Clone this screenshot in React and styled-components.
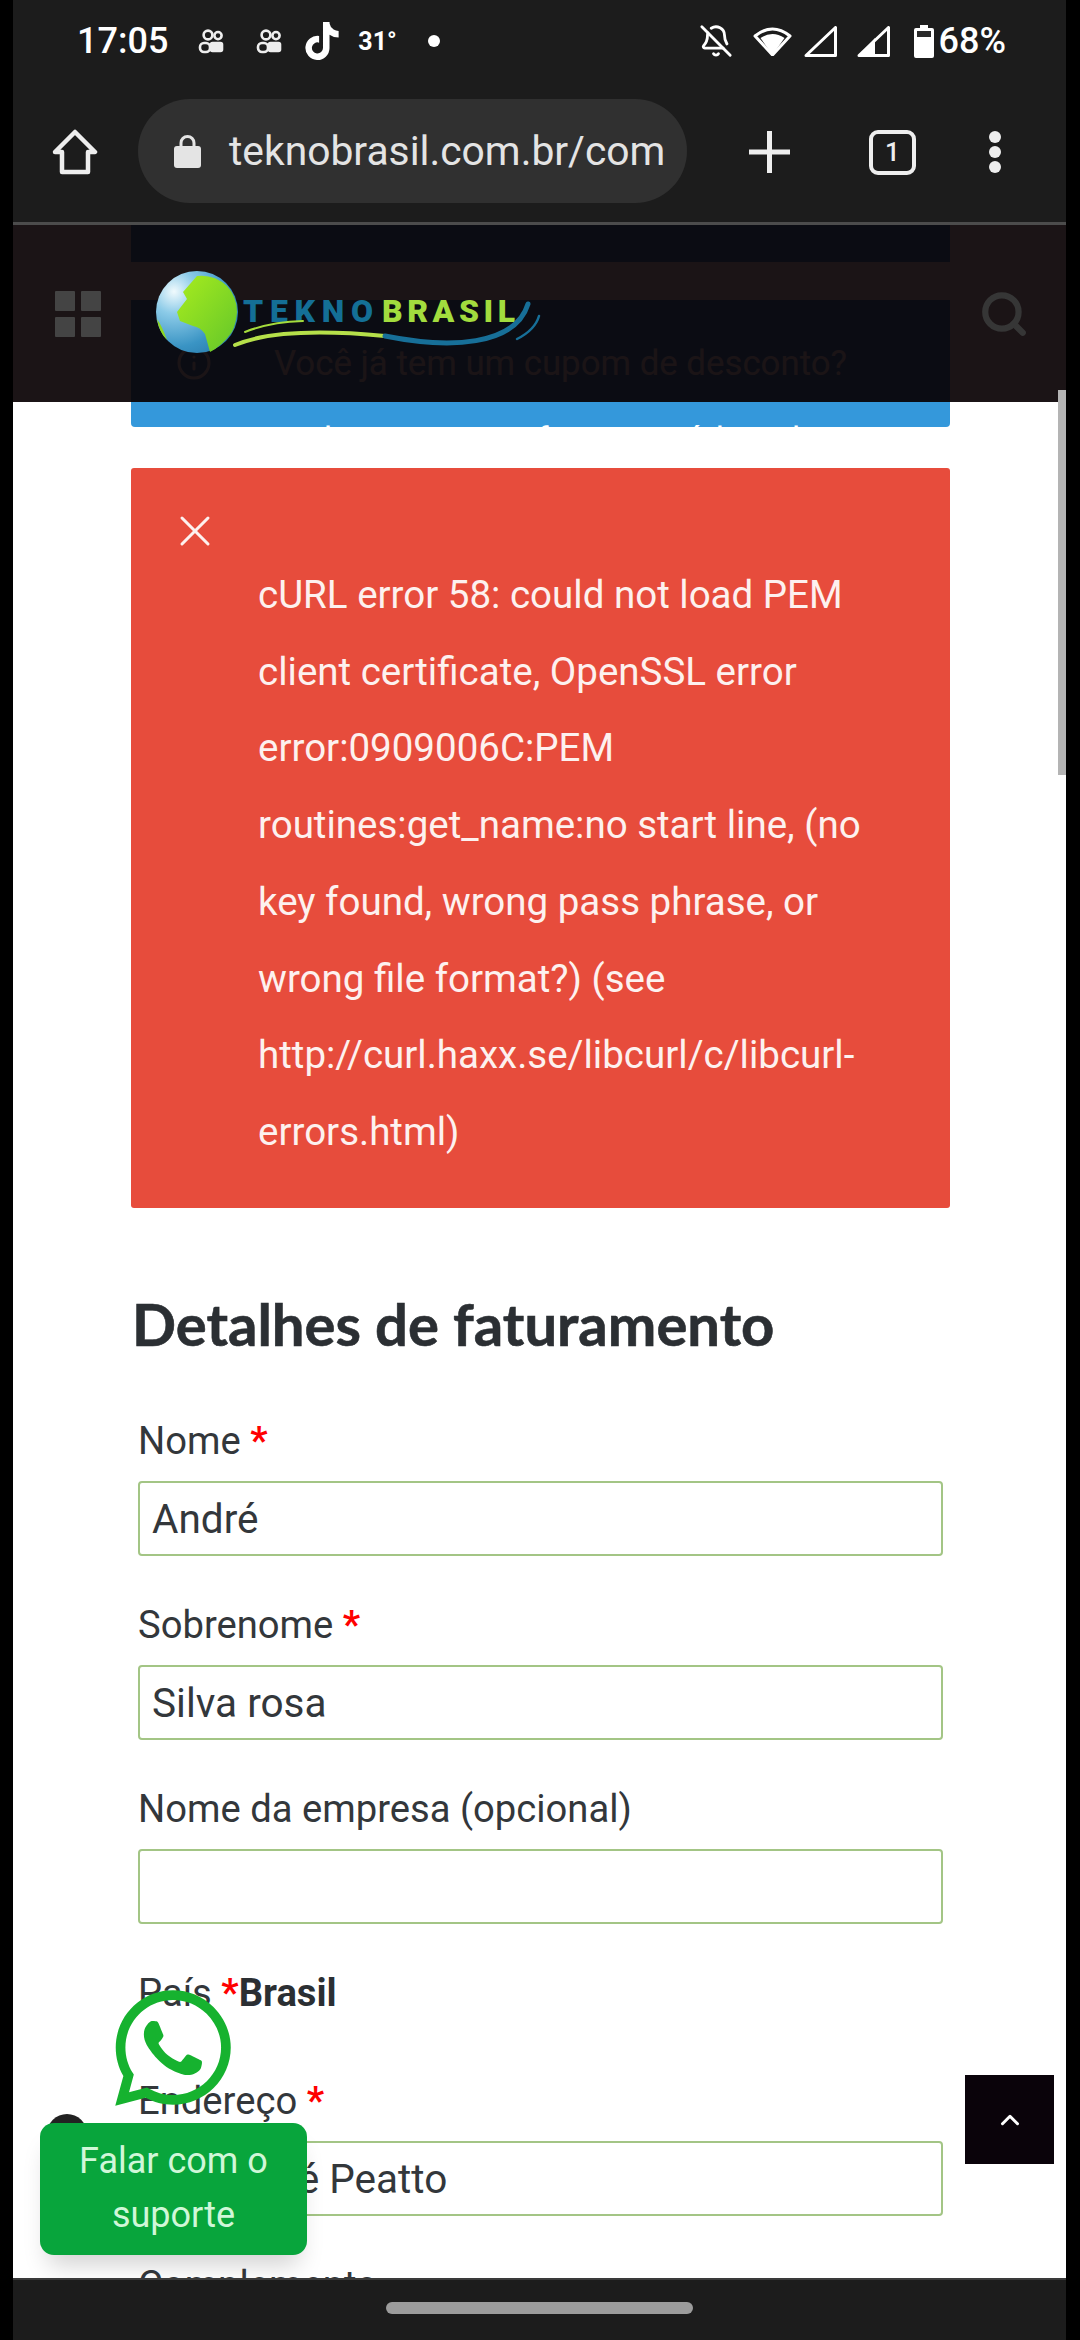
import React from 'react';
import styled, { createGlobalStyle } from 'styled-components';
import { BellOff, ChevronUp, Search, X, Info } from 'lucide-react';
import { FaTiktok, FaWhatsapp } from 'react-icons/fa';

const GlobalStyle = createGlobalStyle`
html, body {
  margin: 0;
  padding: 0;
  background: #000;
}
* { box-sizing: border-box; }
`;

const Phone = styled.div`
width: 1080px;
height: 2340px;
padding: 0 14px 0 13px;
background: #000;
overflow: hidden;
`;

const Screen = styled.div`
height: 100%;
display: flex;
flex-direction: column;
background: #1c1c1c;
`;

const StatusBar = styled.div`
height: 82px;
flex: none;
padding: 0 60px 0 64px;
display: flex;
align-items: center;
justify-content: space-between;
color: #fff;
font-family: Roboto, sans-serif;
`;

const StatusGroup = styled.div`
display: flex;
align-items: center;
`;

const StatusItem = styled.div`
display: flex;
margin-left: ${(props) => props.$gap || 0}px;
`;

const StatusTime = styled.span`
font-size: 36px;
font-weight: 500;
line-height: 1;
`;

const StatusSmall = styled.span`
font-size: 25px;
font-weight: 700;
line-height: 1;
`;

const Dot = styled.span`
width: 12px;
height: 12px;
border-radius: 50%;
background: #fff;
`;

const BrowserBar = styled.div`
height: 143px;
flex: none;
padding: 0 64px 0 39px;
display: flex;
align-items: center;
border-bottom: 3px solid #4c4c4c;
color: #eee;
`;

const UrlPill = styled.div`
width: 549px;
height: 104px;
margin: -2px 62px 0 40px;
padding-left: 36px;
display: flex;
align-items: center;
gap: 28px;
background: #303030;
border-radius: 52px;
`;

const UrlText = styled.span`
font-family: Roboto, sans-serif;
font-size: 40.8px;
color: #e4e4e4;
white-space: nowrap;
`;

const TabCount = styled.div`
width: 47px;
height: 45px;
margin: 0 72px 0 79px;
display: flex;
align-items: center;
justify-content: center;
border: 4px solid #eee;
border-radius: 9px;
font-family: Roboto, sans-serif;
font-size: 26px;
font-weight: 500;
`;

const Viewport = styled.div`
position: relative;
flex: 1;
min-height: 0;
overflow: hidden;
background: #fff;
`;

const Content = styled.div`
padding: 0 116px 0 118px;
`;

const TopNotice = styled.div`
height: 37px;
margin-bottom: 38px;
background: #3498db;
`;

const InfoBox = styled.div`
position: relative;
height: 127px;
padding: 25px 65px 0 105px;
margin-bottom: 41px;
overflow: hidden;
background: #3498db;
border-radius: 0 0 4px 4px;
color: #fff;
font-family: Roboto, sans-serif;
font-size: 34.8px;
line-height: 76.7px;
text-align: center;
white-space: nowrap;
`;

const InfoIcon = styled.span`
position: absolute;
left: 45px;
top: 45px;
display: flex;
`;

const ErrorBox = styled.div`
height: 740px;
padding: 37px 80px 39px 38px;
background: #e74c3c;
border-radius: 3px;
color: #fdf1ef;
font-family: Roboto, sans-serif;
font-size: 38.5px;
line-height: 76.7px;
`;

const CloseIcon = styled.div`
height: 52px;
`;

const ErrorText = styled.div`
padding-left: 89px;
`;

const Heading = styled.h3`
margin: 71px 0 45px 1px;
font-family: Lato, sans-serif;
font-size: 58px;
font-weight: 700;
line-height: 90px;
color: #2b2f33;
white-space: nowrap;
-webkit-text-stroke: 0.6px #2b2f33;
`;

const Field = styled.div`
padding: 0 7px;
margin-bottom: ${(props) => props.$bottom || 42}px;
`;

const Label = styled.div`
height: 54px;
margin-bottom: 13px;
font-family: Roboto, sans-serif;
font-size: 38.2px;
line-height: 54px;
color: #33373b;
`;

const Star = styled.span`
color: #f00;
font-weight: 700;
`;

const Country = styled.strong`
font-weight: 700;
color: #2b2f33;
`;

const Input = styled.div`
height: 75px;
padding-left: 12px;
display: flex;
align-items: center;
border: 2px solid #a3c585;
border-radius: 4px;
font-family: Roboto, sans-serif;
font-size: 40.5px;
color: #33373b;
`;

const SiteHeader = styled.div`
position: absolute;
top: 0;
left: 0;
right: 0;
height: 177px;
padding: 0 37px 0 42px;
display: flex;
align-items: center;
background: rgba(8, 0, 2, 0.92);
`;

const Logo = styled.svg`
margin-left: 49px;
flex: none;
`;

const SearchSlot = styled.div`
margin-left: auto;
display: flex;
`;

const ScrollThumb = styled.div`
position: absolute;
top: 165px;
right: 0;
width: 8px;
height: 385px;
background: #b4b4b4;
`;

const ChatDot = styled.div`
position: absolute;
left: 34px;
top: 1889px;
width: 40px;
height: 40px;
border-radius: 50%;
background: #222;
`;

const WhatsappSlot = styled.div`
position: absolute;
left: 94px;
top: 1757px;
display: flex;
color: #16b22f;
`;

const ChatTooltip = styled.div`
position: absolute;
left: 27px;
top: 1898px;
width: 267px;
height: 132px;
padding-top: 11px;
background: #08a53c;
border-radius: 14px;
box-shadow: 0 18px 24px -8px rgba(0, 0, 0, 0.18);
color: #d0f7d8;
font-family: Roboto, sans-serif;
font-size: 36px;
line-height: 54px;
text-align: center;
`;

const ScrollTop = styled.div`
position: absolute;
right: 12px;
top: 1850px;
width: 89px;
height: 89px;
display: flex;
align-items: center;
justify-content: center;
background: #0a030a;
color: #fff;
`;

const NavBar = styled.div`
height: 62px;
flex: none;
display: flex;
justify-content: center;
padding-top: 22px;
border-top: 2px solid #3a3a3a;
`;

const NavPill = styled.div`
width: 307px;
height: 12px;
border-radius: 6px;
background: #9c9c9c;
`;

function KwaiIcon() {
  return (
    <svg width="26" height="26" viewBox="0 0 26 26" fill="none" stroke="#eee" strokeWidth="2.6">
      <circle cx="10" cy="7" r="4.4" />
      <circle cx="20" cy="7.6" r="3.6" />
      <rect x="2" y="15" width="10" height="9" rx="4" />
      <rect x="13" y="15" width="11" height="8" rx="1.5" fill="#eee" />
    </svg>
  );
}

function WifiIcon() {
  return (
    <svg width="39" height="30" viewBox="0 0 39 30">
      <path d="M2 10 Q19.5 -4 37 10 L19.5 29 Z" fill="none" stroke="#fff" strokeWidth="3" strokeLinejoin="round" />
      <path d="M7.5 12 Q19.5 4 31.5 12 L19.5 29 Z" fill="#fff" />
    </svg>
  );
}

function SignalIcon({ filled }) {
  return (
    <svg width="33" height="31" viewBox="0 0 33 31">
      {filled && <path d="M1 30 L18 12 L18 30 Z" fill="#fff" />}
      <path d="M2 29.5 L31.5 1.5 L31.5 29.5 Z" fill="none" stroke="#fff" strokeWidth="3" strokeLinejoin="round" />
    </svg>
  );
}

function BatteryIcon() {
  return (
    <svg width="20" height="33" viewBox="0 0 20 33">
      <path d="M6 0 H14 V3 H18 Q20 3 20 5 V31 Q20 33 18 33 H2 Q0 33 0 31 V5 Q0 3 2 3 H6 Z" fill="#fff" />
      <rect x="3" y="6" width="14" height="6" fill="#2a2a2a" />
    </svg>
  );
}

function HomeIcon() {
  return (
    <svg width="46" height="46" viewBox="0 0 46 46" fill="none" stroke="#eee" strokeWidth="4.5" strokeLinejoin="round">
      <path d="M23 3 L43 23 H36 V43 H10 V23 H3 Z" />
    </svg>
  );
}

function LockIcon() {
  return (
    <svg width="27" height="34" viewBox="0 0 27 34">
      <path d="M7 13 V9 a6.5 6.5 0 0 1 13 0 V13" fill="none" stroke="#e4e4e4" strokeWidth="3" />
      <rect x="0" y="12" width="27" height="22" rx="3" fill="#e4e4e4" />
    </svg>
  );
}

function PlusIcon() {
  return (
    <svg width="41" height="42" viewBox="0 0 41 42" stroke="#eee" strokeWidth="5">
      <path d="M20.5 0 V42 M0 21 H41" />
    </svg>
  );
}

function MenuDots() {
  return (
    <svg width="14" height="42" viewBox="0 0 14 42" fill="#eee">
      <circle cx="7" cy="6" r="6" />
      <circle cx="7" cy="21" r="6" />
      <circle cx="7" cy="36" r="6" />
    </svg>
  );
}

function GridIcon() {
  return (
    <svg width="46" height="46" viewBox="0 0 46 46" fill="#444">
      <rect width="20" height="20" rx="1" />
      <rect x="26" width="20" height="20" rx="1" />
      <rect y="26" width="20" height="20" rx="1" />
      <rect x="26" y="26" width="20" height="20" rx="1" />
    </svg>
  );
}

function TeknoLogo() {
  return (
    <Logo width="400" height="100" viewBox="0 0 400 100">
      <defs>
        <radialGradient id="ocean" cx="22%" cy="25%" r="90%">
          <stop offset="0" stopColor="#f0fafd" />
          <stop offset="0.3" stopColor="#8ccbe8" />
          <stop offset="0.75" stopColor="#3a94c4" />
          <stop offset="1" stopColor="#2b7fb0" />
        </radialGradient>
        <linearGradient id="land" x1="0" y1="0" x2="1" y2="1">
          <stop offset="0" stopColor="#a8ec1e" />
          <stop offset="1" stopColor="#63c62a" />
        </linearGradient>
      </defs>
      <circle cx="47" cy="48" r="41" fill="url(#ocean)" />
      <path d="M47 12 Q64 10 77 22 Q87 33 87 48 Q86 60 82 68 Q72 82 60 88 L55 70 Q50 63 43 62 L30 57 L27 48 L37 35 L33 28 Z" fill="url(#land)" />
      <path d="M7 55 Q12 62 17 76 Q9 68 7 55 Z" fill="#8fd81f" />
      <text x="93" y="58" fill="#146f96" fontFamily="Roboto, sans-serif" fontWeight="900" fontSize="32" textLength="130" lengthAdjust="spacing">TEKNO</text>
      <text x="232" y="58" fill="#a2dc3e" fontFamily="Roboto, sans-serif" fontWeight="900" fontSize="32" textLength="133" lengthAdjust="spacing">BRASIL</text>
      <g fill="none" strokeLinecap="round">
        <path d="M85 81 Q130 62 235 72" stroke="#b6e04a" strokeWidth="4" />
        <path d="M95 68 Q120 58 153 57" stroke="#a5dc3c" strokeWidth="2" />
        <path d="M235 72 C300 85 365 82 378 40" stroke="#176f98" strokeWidth="5" />
        <path d="M367 75 Q385 66 389 52" stroke="#176f98" strokeWidth="2.5" />
      </g>
    </Logo>
  );
}

function App() {
  return (
    <Phone>
      <GlobalStyle />
      <Screen>
        <StatusBar>
          <StatusGroup>
            <StatusTime>17:05</StatusTime>
            <StatusItem $gap={30}><KwaiIcon /></StatusItem>
            <StatusItem $gap={32}><KwaiIcon /></StatusItem>
            <StatusItem $gap={21}><FaTiktok size={38} /></StatusItem>
            <StatusItem $gap={17}><StatusSmall>31°</StatusSmall></StatusItem>
            <StatusItem $gap={31}><Dot /></StatusItem>
          </StatusGroup>
          <StatusGroup>
            <BellOff size={34} strokeWidth={2} />
            <StatusItem $gap={20}><WifiIcon /></StatusItem>
            <StatusItem $gap={12}><SignalIcon /></StatusItem>
            <StatusItem $gap={20}><SignalIcon filled /></StatusItem>
            <StatusItem $gap={24}><BatteryIcon /></StatusItem>
            <StatusItem $gap={5}><StatusTime>68%</StatusTime></StatusItem>
          </StatusGroup>
        </StatusBar>

        <BrowserBar>
          <HomeIcon />
          <UrlPill>
            <LockIcon />
            <UrlText>teknobrasil.com.br/com</UrlText>
          </UrlPill>
          <PlusIcon />
          <TabCount>1</TabCount>
          <MenuDots />
        </BrowserBar>

        <Viewport>
          <Content>
            <TopNotice />
            <InfoBox>
              <InfoIcon><Info size={36} /></InfoIcon>
              Você já tem um cupom de desconto?
              <br />
              Clique aqui e informe o código do
            </InfoBox>
            <ErrorBox>
              <CloseIcon><X size={52} strokeWidth={1.4} /></CloseIcon>
              <ErrorText>
                cURL error 58: could not load PEM client certificate, OpenSSL error error:0909006C:PEM routines:get_name:no start line, (no key found, wrong pass phrase, or wrong file format?) (see http://curl.haxx.se/libcurl/c/libcurl-errors.html)
              </ErrorText>
            </ErrorBox>

            <Heading>Detalhes de faturamento</Heading>

            <Field>
              <Label>Nome <Star>*</Star></Label>
              <Input>André</Input>
            </Field>
            <Field>
              <Label>Sobrenome <Star>*</Star></Label>
              <Input>Silva rosa</Input>
            </Field>
            <Field>
              <Label>Nome da empresa (opcional)</Label>
              <Input />
            </Field>
            <Field $bottom={54}>
              <Label>País <Star>*</Star><Country>Brasil</Country></Label>
            </Field>
            <Field>
              <Label>Endereço <Star>*</Star></Label>
              <Input>Rua José Peatto</Input>
            </Field>
            <Field>
              <Label>Complemento</Label>
            </Field>
          </Content>

          <SiteHeader>
            <GridIcon />
            <TeknoLogo />
            <SearchSlot><Search size={50} strokeWidth={3} color="#363636" /></SearchSlot>
          </SiteHeader>
          <ScrollThumb />
          <ChatDot />
          <WhatsappSlot><FaWhatsapp size={132} /></WhatsappSlot>
          <ChatTooltip>Falar com o<br />suporte</ChatTooltip>
          <ScrollTop><ChevronUp size={30} strokeWidth={2.4} /></ScrollTop>
        </Viewport>

        <NavBar><NavPill /></NavBar>
      </Screen>
    </Phone>
  );
}

export default App;
